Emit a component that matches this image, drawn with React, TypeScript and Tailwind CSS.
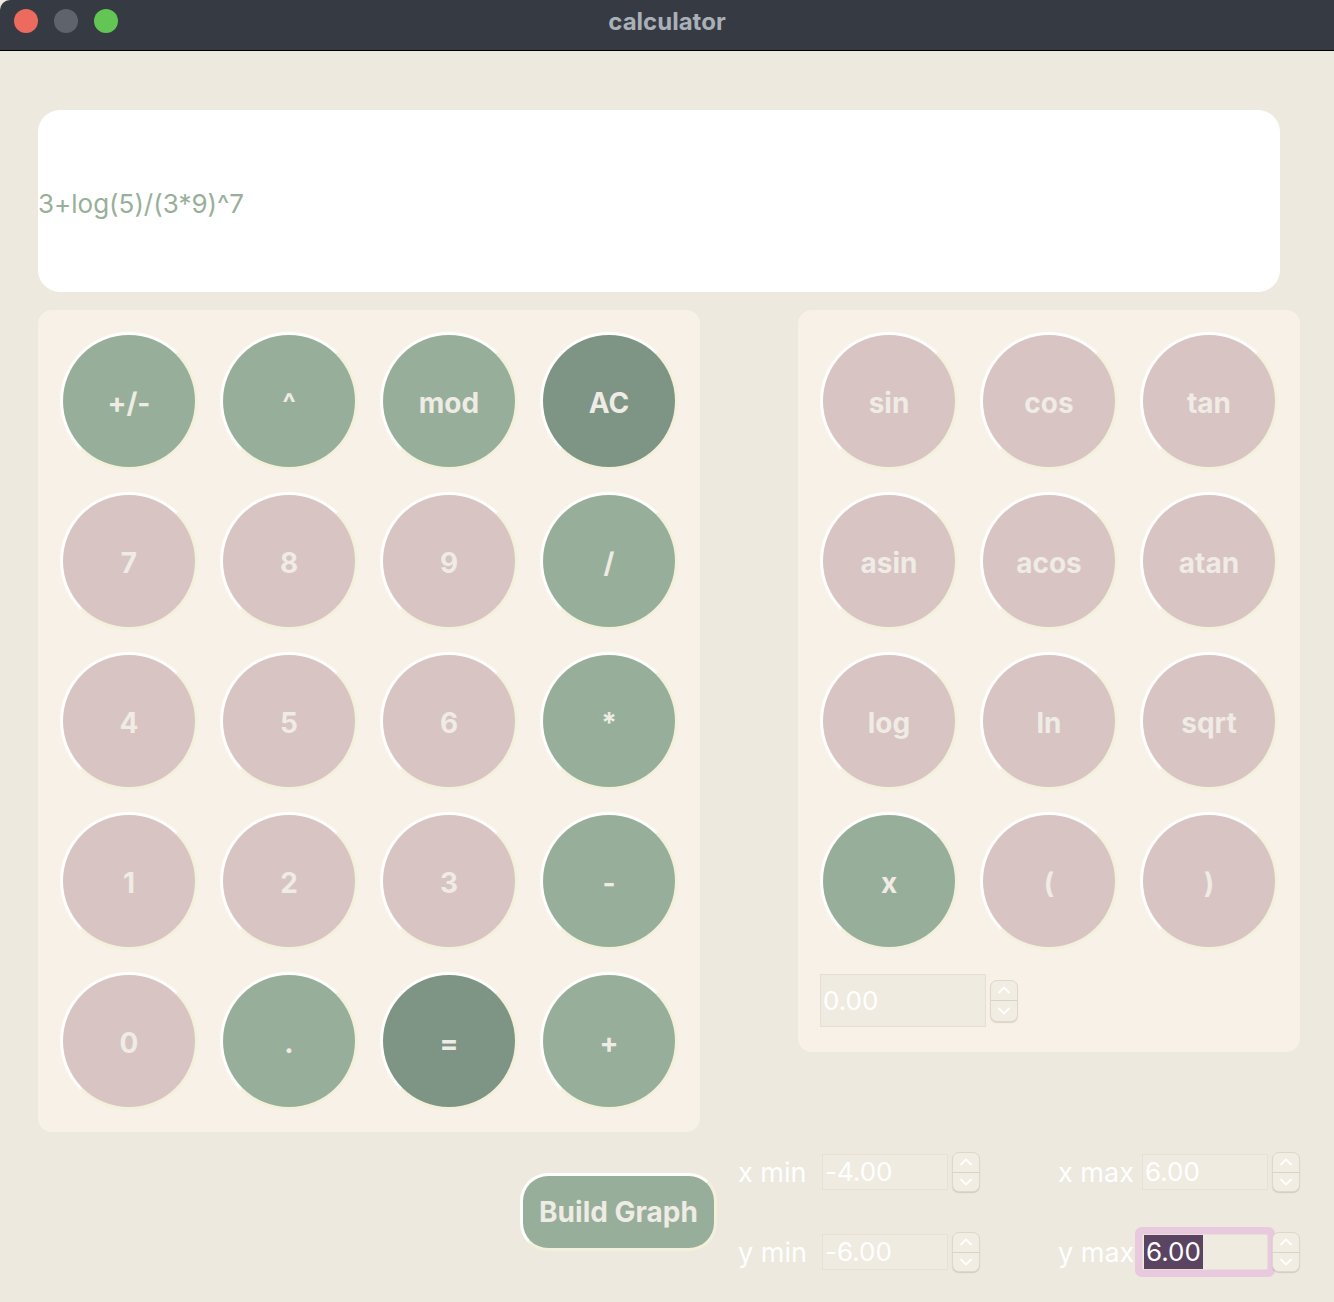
import React from "react";

type Tone = "green" | "dark" | "pink";

const leftKeys: { label: string; tone: Tone }[] = [
  { label: "+/-", tone: "green" },
  { label: "^", tone: "green" },
  { label: "mod", tone: "green" },
  { label: "AC", tone: "dark" },
  { label: "7", tone: "pink" },
  { label: "8", tone: "pink" },
  { label: "9", tone: "pink" },
  { label: "/", tone: "green" },
  { label: "4", tone: "pink" },
  { label: "5", tone: "pink" },
  { label: "6", tone: "pink" },
  { label: "*", tone: "green" },
  { label: "1", tone: "pink" },
  { label: "2", tone: "pink" },
  { label: "3", tone: "pink" },
  { label: "-", tone: "green" },
  { label: "0", tone: "pink" },
  { label: ".", tone: "green" },
  { label: "=", tone: "dark" },
  { label: "+", tone: "green" },
];

const rightKeys: { label: string; tone: Tone }[] = [
  { label: "sin", tone: "pink" },
  { label: "cos", tone: "pink" },
  { label: "tan", tone: "pink" },
  { label: "asin", tone: "pink" },
  { label: "acos", tone: "pink" },
  { label: "atan", tone: "pink" },
  { label: "log", tone: "pink" },
  { label: "ln", tone: "pink" },
  { label: "sqrt", tone: "pink" },
  { label: "x", tone: "green" },
  { label: "(", tone: "pink" },
  { label: ")", tone: "pink" },
];

const toneClass: Record<Tone, string> = {
  green: "bg-[#97af9a]",
  dark: "bg-[#7e9484]",
  pink: "bg-[#d8c4c3]",
};

const CalcKey = ({ label, tone }: { label: string; tone: Tone }) => (
  <button
    className={`w-[138px] h-[138px] rounded-full border-[3px] border-t-white border-l-white border-r-[#f3f1dc] border-b-[#f3f1dc] ${toneClass[tone]} flex items-center justify-center pt-[4px] text-[28px] font-bold text-[#efebe5]`}
  >
    {label}
  </button>
);

// up / down arrows next to each number field
const Stepper = ({ className = "" }: { className?: string }) => (
  <div
    className={`w-[28px] flex flex-col rounded-[7px] border border-[#ddd8cb] bg-[#f1ede3] shadow-[0_1px_1px_rgba(0,0,0,0.12)] overflow-hidden ${className}`}
  >
    <div className="flex-1 flex items-center justify-center border-b border-[#d8d3c6]">
      <svg width="14" height="8" viewBox="0 0 14 8" fill="none">
        <path d="M2 6.5 7 1.5l5 5" stroke="#ffffff" strokeWidth="1.8" strokeLinecap="round" strokeLinejoin="round" />
      </svg>
    </div>
    <div className="flex-1 flex items-center justify-center">
      <svg width="14" height="8" viewBox="0 0 14 8" fill="none">
        <path d="M2 1.5 7 6.5l5-5" stroke="#ffffff" strokeWidth="1.8" strokeLinecap="round" strokeLinejoin="round" />
      </svg>
    </div>
  </div>
);

const RangeField = ({
  label,
  value,
  focused = false,
}: {
  label: string;
  value: string;
  focused?: boolean;
}) => (
  <div className="flex items-center h-[40px]">
    <span className="w-[84px] text-[27px] text-white leading-none">{label}</span>
    <div
      className={`w-[126px] h-[36px] flex items-center border border-[#e6e1d4] bg-[#efebe0] ${
        focused ? "ring-[7px] ring-[#e9c9dd] rounded-[2px]" : ""
      }`}
    >
      {focused ? (
        <span className="ml-[1px] px-[2px] bg-[#5b4462] text-[26px] leading-[34px] text-white">
          {value}
        </span>
      ) : (
        <span className="ml-[2px] text-[26px] leading-none text-white">{value}</span>
      )}
    </div>
    <Stepper className="ml-[4px] h-[40px]" />
  </div>
);

const App = () => {
  return (
    <div className="w-[1334px] h-[1302px] bg-[#ede9de] overflow-hidden font-['Inter',sans-serif] [font-feature-settings:'calt'_0]">
      {/* Title bar */}
      <div className="relative h-[51px] bg-[#363b43] border-b border-black rounded-tl-[10px] flex items-center justify-center">
        <div className="absolute left-[14px] top-[9px] flex gap-[16px]">
          <span className="w-[24px] h-[24px] rounded-full bg-[#ed6a5e]" />
          <span className="w-[24px] h-[24px] rounded-full bg-[#5f636b]" />
          <span className="w-[24px] h-[24px] rounded-full bg-[#62c554]" />
        </div>
        <span className="text-[24px] font-bold text-[#a9b0b8] -mt-[7px]">calculator</span>
      </div>

      <div className="pl-[38px]">
        {/* Display */}
        <div className="mt-[59px] w-[1242px] h-[182px] rounded-[22px] bg-white flex items-center pt-[4px]">
          <span className="text-[26px] text-[#97b09a]">3+log(5)/(3*9)^7</span>
        </div>

        {/* Keypads */}
        <div className="mt-[18px] flex items-start gap-[98px]">
          <div className="w-[662px] shrink-0 rounded-[14px] bg-[#f7f1e7] p-[22px] grid grid-cols-4 gap-[22px]">
            {leftKeys.map((k) => (
              <CalcKey key={k.label} label={k.label} tone={k.tone} />
            ))}
          </div>

          <div className="w-[502px] shrink-0 rounded-[14px] bg-[#f7f1e7] px-[22px] pt-[22px] pb-[25px]">
            <div className="grid grid-cols-3 gap-[22px]">
              {rightKeys.map((k) => (
                <CalcKey key={k.label} label={k.label} tone={k.tone} />
              ))}
            </div>
            <div className="mt-[24px] flex items-center">
              <div className="w-[166px] h-[53px] flex items-center border border-[#e4dfd1] bg-[#efebe0]">
                <span className="ml-[2px] text-[26px] text-white">0.00</span>
              </div>
              <Stepper className="ml-[4px] h-[42px]" />
            </div>
          </div>
        </div>
      </div>

      {/* Graph controls */}
      <div className="mt-[20px] pl-[520px] flex items-center">
        <button className="w-[197px] h-[78px] shrink-0 rounded-[28px] border-[3px] border-t-white border-l-white border-r-[#f3f1dc] border-b-[#f3f1dc] bg-[#97af9a] text-[28px] font-bold text-[#efebe5]">
          Build Graph
        </button>
        <div className="ml-[21px] grid grid-cols-2 gap-x-[78px] gap-y-[40px]">
          <RangeField label="x min" value="-4.00" />
          <RangeField label="x max" value="6.00" />
          <RangeField label="y min" value="-6.00" />
          <RangeField label="y max" value="6.00" focused />
        </div>
      </div>
    </div>
  );
};

export default App;
